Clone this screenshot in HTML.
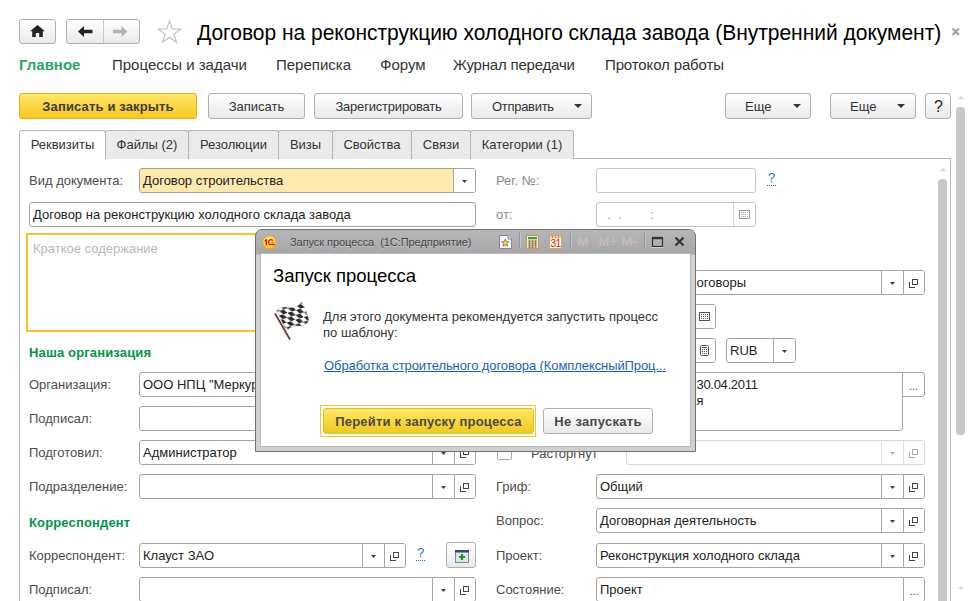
<!DOCTYPE html>
<html>
<head>
<meta charset="utf-8">
<style>
*{box-sizing:border-box;margin:0;padding:0}
html,body{width:977px;height:601px;overflow:hidden;background:#fff}
body{font-family:"Liberation Sans",sans-serif;font-size:13px;color:#333;position:relative}
.a{position:absolute;white-space:nowrap}
.btn{position:absolute;height:26px;border:1px solid #b0b0b0;border-radius:3px;background:linear-gradient(#ffffff,#e9e9e9);text-align:center;line-height:25px;font-size:13px;color:#333;white-space:nowrap}
.ybtn{border-color:#e2b01a;background:linear-gradient(#ffe868,#f8c71f);font-weight:bold;color:#3c3c3c}
.tab{position:absolute;top:130px;height:29px;border:1px solid #b4b4b4;border-bottom:none;border-radius:3px 3px 0 0;background:#ebebeb;font-size:13px;line-height:27px;text-align:center;color:#333}
.tab.act{background:#fff;z-index:2}
.tab.act:after{content:"";position:absolute;left:0;right:0;bottom:-1px;height:1px;background:#fff}
.lbl{position:absolute;font-size:13px;color:#4b4b4b;white-space:nowrap;line-height:16px}
.hdr{position:absolute;font-size:13px;font-weight:bold;color:#009646;white-space:nowrap;line-height:16px;letter-spacing:.15px}
.fld{position:absolute;height:25px;border:1px solid #a3a3a3;border-radius:3px;background:#fff;font-size:13px;line-height:23px;color:#222;padding-left:3px;white-space:nowrap;overflow:hidden}
.seg{position:absolute;top:0;bottom:0;width:21px;border-left:1px solid #a8a8a8;background:#fff}
.dd{width:22px}
.dd:after{content:"";position:absolute;left:8px;top:11px;width:5px;height:3px;background:#3c3c3c;clip-path:polygon(0 0,100% 0,50% 100%)}
.tri{position:absolute;width:0;height:0;border:4px solid transparent;border-top:4px solid #333;border-bottom:none}
.op i{position:absolute;display:block;left:5px;top:11px;width:6px;height:6px;border-left:1px solid #444;border-bottom:1px solid #444}
.op b{position:absolute;display:block;left:8px;top:8px;width:6px;height:6px;border:1px solid #444;background:#fff}
.dots,.dots2{font-size:11px;text-align:center;color:#444;line-height:27px}
.dis{border-color:#d6d6d6}
.dis .seg{border-color:#dedede}
.dis .dd:after{background:#b0b0b0}
.dis .op i,.dis .op b{border-color:#aaa}
.q{font-size:13px;color:#1a6fc4;border-bottom:1px dotted #1a6fc4;line-height:14px;width:9px;text-align:center}
.sarr{width:0;height:0;border:3px solid transparent}
.sarr.up{border-bottom:3px solid #d8d8d8;border-top:none}
.sarr.dn{border-top:3px solid #d8d8d8;border-bottom:none}
</style>
</head>
<body>
<div class="btn" style="left:19px;top:19px;width:37px;height:25px"></div>
<div class="btn" style="left:66px;top:19px;width:74px;height:25px"></div>
<div class="a" style="left:103px;top:20px;width:1px;height:23px;background:#c9c9c9"></div>
<svg class="a" style="left:30px;top:25px" width="15" height="12" viewBox="0 0 15 12"><path d="M7.500 0L0 6.200h2.200V12h3.600V8h3.400v4h3.600V6.200H15z" fill="#222"/></svg>
<svg class="a" style="left:78px;top:26px" width="15" height="11" viewBox="0 0 15 11"><path d="M0 5.500L6 0v3.700h8.500v3.600H6V11z" fill="#222"/></svg>
<svg class="a" style="left:113px;top:26px" width="15" height="11" viewBox="0 0 15 11"><path d="M14.500 5.500L8.500 0v3.700H0v3.600h8.500V11z" fill="#b4b4b4"/></svg>
<svg class="a" style="left:157px;top:19px" width="26" height="26" viewBox="0 0 26 26"><path d="M12.50 1.90L15.26 9.90L23.72 10.05L16.97 15.15L19.44 23.25L12.50 18.40L5.56 23.25L8.03 15.15L1.28 10.05L9.74 9.90Z" fill="#fff" stroke="#c6c6c6" stroke-width="1.300" stroke-linejoin="miter"/></svg>
<svg class="a" style="left:951px;top:27px" width="10" height="10" viewBox="0 0 10 10"><path d="M1.500 1.500l6.500 6.500M8 1.500l-6.500 6.500" stroke="#9a9a9a" stroke-width="1.800"/></svg>
<div class="a" id="title" style="left:197px;top:20px;font-size:21px;line-height:26px;color:#000;letter-spacing:-0.02px;transform-origin:0 20px;transform:scaleY(1.06)">Договор на реконструкцию холодного склада завода (Внутренний документ)</div>
<div class="a" style="left:19px;top:56px;font-size:15px;line-height:18px;font-weight:bold;color:#2fa468">Главное</div>
<div class="a" style="left:112px;top:56px;font-size:15px;line-height:18px;">Процессы и задачи</div>
<div class="a" style="left:276px;top:56px;font-size:15px;line-height:18px;">Переписка</div>
<div class="a" style="left:380px;top:56px;font-size:15px;line-height:18px;">Форум</div>
<div class="a" style="left:453px;top:56px;font-size:15px;line-height:18px;letter-spacing:-0.2px">Журнал передачи</div>
<div class="a" style="left:605px;top:56px;font-size:15px;line-height:18px;letter-spacing:-0.13px">Протокол работы</div>
<div class="btn ybtn" style="left:19px;top:93px;width:178px;letter-spacing:.15px">Записать и закрыть</div>
<div class="btn" style="left:208px;top:93px;width:97px">Записать</div>
<div class="btn" style="left:314px;top:93px;width:149px;letter-spacing:-.2px">Зарегистрировать</div>
<div class="btn" style="left:471px;top:93px;width:121px;text-align:left;padding-left:20px;letter-spacing:-.3px">Отправить</div>
<div class="btn" style="left:725px;top:93px;width:86px;text-align:left;padding-left:19px">Еще</div>
<div class="btn" style="left:830px;top:93px;width:86px;text-align:left;padding-left:19px">Еще</div>
<div class="btn" style="left:925px;top:93px;width:26px;font-size:16px;line-height:25px;color:#222;padding-left:1px">?</div>
<div class="tri" style="left:574px;top:104px"></div><div class="tri" style="left:793px;top:104px"></div><div class="tri" style="left:897px;top:104px"></div>
<div class="a" style="left:19px;top:158px;width:932px;height:460px;border:1px solid #b4b4b4"></div>
<div class="tab act" style="left:19px;width:87px">Реквизиты</div>
<div class="tab" style="left:105px;width:84px">Файлы (2)</div>
<div class="tab" style="left:188px;width:91px">Резолюции</div>
<div class="tab" style="left:278px;width:55px">Визы</div>
<div class="tab" style="left:332px;width:80px">Свойства</div>
<div class="tab" style="left:411px;width:60px">Связи</div>
<div class="tab" style="left:470px;width:104px">Категории (1)</div>
<div class="lbl" style="left:29px;top:173px;">Вид документа:</div>
<div class="fld " style="left:139px;top:168px;width:337px;height:25px;background:#fee9ae;border-color:#a9a191">Договор строительства<div class="seg dd" style="right:0px"></div></div>
<div class="fld " style="left:29px;top:202px;width:447px;height:25px;">Договор на реконструкцию холодного склада завода</div>
<div class="a" style="left:26px;top:233px;width:450px;height:99px;border:2px solid #f6c428;border-radius:0;background:#fff"><span style="position:absolute;left:5px;top:6px;font-size:13px;color:#b8b8b8">Краткое содержание</span></div>
<div class="hdr" style="left:29px;top:345px;">Наша организация</div>
<div class="lbl" style="left:29px;top:377px;">Организация:</div>
<div class="fld " style="left:139px;top:372px;width:337px;height:25px;">ООО НПЦ "Меркурий"<div class="seg op" style="right:0px"><i></i><b></b></div><div class="seg dd" style="right:21px"></div></div>
<div class="lbl" style="left:29px;top:411px;">Подписал:</div>
<div class="fld " style="left:139px;top:406px;width:337px;height:25px;"><div class="seg op" style="right:0px"><i></i><b></b></div><div class="seg dd" style="right:21px"></div></div>
<div class="lbl" style="left:29px;top:445px;">Подготовил:</div>
<div class="fld " style="left:139px;top:440px;width:337px;height:25px;">Администратор<div class="seg op" style="right:0px"><i></i><b></b></div><div class="seg dd" style="right:21px"></div></div>
<div class="lbl" style="left:29px;top:479px;">Подразделение:</div>
<div class="fld " style="left:139px;top:474px;width:337px;height:25px;"><div class="seg op" style="right:0px"><i></i><b></b></div><div class="seg dd" style="right:21px"></div></div>
<div class="hdr" style="left:29px;top:515px;">Корреспондент</div>
<div class="lbl" style="left:29px;top:548px;">Корреспондент:</div>
<div class="fld " style="left:139px;top:543px;width:267px;height:25px;">Клауст ЗАО<div class="seg op" style="right:0px"><i></i><b></b></div><div class="seg dd" style="right:21px"></div></div>
<div class="a q" style="left:416px;top:546px">?</div>
<div class="btn" style="left:446px;top:542px;width:30px;height:26px"><svg style="position:absolute;left:8px;top:7px" width="14" height="13" viewBox="0 0 14 13"><rect x=".5" y=".5" width="13" height="12" fill="#d9e6f2" stroke="#7b8a9b"/><rect x="0" y="0" width="14" height="2.500" fill="#2d4b6e"/><path d="M4 7h6M7 4v6" stroke="#1e9a1e" stroke-width="2.200"/></svg></div>
<div class="lbl" style="left:29px;top:582px;">Подписал:</div>
<div class="fld " style="left:139px;top:577px;width:337px;height:25px;"><div class="seg op" style="right:0px"><i></i><b></b></div><div class="seg dd" style="right:21px"></div></div>
<div class="lbl" style="left:496px;top:173px;color:#8a8a8a">Рег. №:</div>
<div class="fld " style="left:596px;top:168px;width:160px;height:25px;border-color:#c4c4c4"></div>
<div class="a q" style="left:767px;top:171px">?</div>
<div class="lbl" style="left:496px;top:207px;color:#8a8a8a">от:</div>
<div class="fld " style="left:596px;top:202px;width:160px;height:25px;border-color:#c4c4c4"><span style="color:#999">&nbsp;&nbsp;.&nbsp;&nbsp;.&nbsp;&nbsp;&nbsp;&nbsp;&nbsp;&nbsp;&nbsp;&nbsp;:</span><div class="seg cal" style="right:0;width:22px;border-color:#d0d0d0"><svg width="11" height="9" viewBox="0 0 11 9" style="position:absolute;left:5px;top:7px"><rect x=".5" y=".5" width="10" height="8" fill="#fff" stroke="#999"/><rect x="2" y="2" width="1" height="1" fill="#aaa"/><rect x="4" y="2" width="1" height="1" fill="#aaa"/><rect x="6" y="2" width="1" height="1" fill="#aaa"/><rect x="8" y="2" width="1" height="1" fill="#aaa"/><rect x="2" y="4" width="1" height="1" fill="#aaa"/><rect x="4" y="4" width="1" height="1" fill="#aaa"/><rect x="6" y="4" width="1" height="1" fill="#aaa"/><rect x="8" y="4" width="1" height="1" fill="#aaa"/><rect x="2" y="6" width="1" height="1" fill="#aaa"/><rect x="4" y="6" width="1" height="1" fill="#aaa"/><rect x="6" y="6" width="1" height="1" fill="#aaa"/><rect x="8" y="6" width="1" height="1" fill="#aaa"/></svg></div></div>
<div class="fld " style="left:596px;top:270px;width:329px;height:25px;"><span style="position:absolute;left:99.500px">оговоры</span><div class="seg op" style="right:0px"><i></i><b></b></div><div class="seg dd" style="right:21px"></div></div>
<div class="fld " style="left:596px;top:304px;width:120px;height:25px;"><div class="seg" style="right:0;width:22px"><svg width="11" height="9" viewBox="0 0 11 9" style="position:absolute;left:5px;top:7px"><rect x=".5" y=".5" width="10" height="8" fill="#fff" stroke="#555"/><rect x="2" y="2" width="1" height="1" fill="#555"/><rect x="4" y="2" width="1" height="1" fill="#555"/><rect x="6" y="2" width="1" height="1" fill="#555"/><rect x="8" y="2" width="1" height="1" fill="#555"/><rect x="2" y="4" width="1" height="1" fill="#555"/><rect x="4" y="4" width="1" height="1" fill="#555"/><rect x="6" y="4" width="1" height="1" fill="#555"/><rect x="8" y="4" width="1" height="1" fill="#555"/><rect x="2" y="6" width="1" height="1" fill="#555"/><rect x="4" y="6" width="1" height="1" fill="#555"/><rect x="6" y="6" width="1" height="1" fill="#555"/><rect x="8" y="6" width="1" height="1" fill="#555"/></svg></div></div>
<div class="fld " style="left:596px;top:338px;width:120px;height:25px;"><div class="seg" style="right:0;width:22px"><svg width="9" height="11" viewBox="0 0 9 11" style="position:absolute;left:6px;top:6px"><rect x=".5" y=".5" width="8" height="10" rx="1" fill="#fff" stroke="#555"/><rect x="2" y="2" width="5" height="1" fill="#555"/><rect x="2" y="4" width="1" height="1" fill="#555"/><rect x="4" y="4" width="1" height="1" fill="#555"/><rect x="6" y="4" width="1" height="1" fill="#555"/><rect x="2" y="6" width="1" height="1" fill="#555"/><rect x="4" y="6" width="1" height="1" fill="#555"/><rect x="6" y="6" width="1" height="1" fill="#555"/><rect x="2" y="8" width="1" height="1" fill="#555"/><rect x="4" y="8" width="1" height="1" fill="#555"/><rect x="6" y="8" width="1" height="1" fill="#555"/></svg></div></div>
<div class="fld " style="left:726px;top:338px;width:70px;height:25px;">RUB<div class="seg dd" style="right:0px"></div></div>
<div class="fld" style="left:596px;top:372px;width:307px;height:59px;border-radius:3px 0 3px 3px;line-height:16px;white-space:normal"><span style="position:absolute;left:99.500px;top:4px;letter-spacing:-.3px">30.04.2011</span><span style="position:absolute;left:99.500px;top:20px">я</span></div>
<div class="fld dots2" style="left:902px;top:372px;width:23px;height:25px;border-radius:0 3px 3px 0;padding:0;text-align:center">...</div>
<div class="a" style="left:497px;top:445px;width:15px;height:15px;border:1px solid #a9a9a9;border-radius:2px;background:#fff"></div>
<div class="lbl" style="left:531px;top:446px;">Расторгнут</div>
<div class="fld dis" style="left:626px;top:440px;width:299px;height:25px;"><div class="seg op" style="right:0px"><i></i><b></b></div><div class="seg dd" style="right:21px"></div></div>
<div class="lbl" style="left:496px;top:479px;">Гриф:</div>
<div class="fld " style="left:596px;top:474px;width:329px;height:25px;">Общий<div class="seg op" style="right:0px"><i></i><b></b></div><div class="seg dd" style="right:21px"></div></div>
<div class="lbl" style="left:496px;top:513px;">Вопрос:</div>
<div class="fld " style="left:596px;top:508px;width:329px;height:25px;">Договорная деятельность<div class="seg op" style="right:0px"><i></i><b></b></div><div class="seg dd" style="right:21px"></div></div>
<div class="lbl" style="left:496px;top:548px;">Проект:</div>
<div class="fld " style="left:596px;top:543px;width:329px;height:25px;">Реконструкция холодного склада<div class="seg op" style="right:0px"><i></i><b></b></div><div class="seg dd" style="right:21px"></div></div>
<div class="lbl" style="left:496px;top:582px;">Состояние:</div>
<div class="fld " style="left:596px;top:577px;width:329px;height:25px;">Проект<div class="seg dots" style="right:0px">...</div></div>
<div class="a" style="left:938px;top:179px;width:9px;height:430px;background:#c8c8c8;border-radius:4px"></div>
<div class="a" style="left:956px;top:107px;width:9px;height:328px;background:#c8c8c8;border-radius:4px"></div>
<div class="a sarr up" style="left:940px;top:168px"></div><div class="a sarr up" style="left:958px;top:96px"></div><div class="a sarr dn" style="left:958px;top:587px"></div>
<div id="dlg" class="a" style="left:255px;top:229px;width:441px;height:223px;border:1px solid #707070;border-radius:7px 7px 0 0;background:linear-gradient(#b6b6b9 0,#a7a7aa 24px,#d2d2d2 25px,#cfcfcf 100%)">
 <div class="a" style="left:5px;top:24px;width:429px;height:192px;background:#fff;box-shadow:0 0 0 1px #b9b9b9"></div>
 <svg class="a" style="left:6px;top:5px" width="15" height="15" viewBox="0 0 15 15"><defs><radialGradient id="lg" cx=".45" cy=".35" r=".7"><stop offset="0" stop-color="#fff27a"/><stop offset=".7" stop-color="#ffd51f"/><stop offset="1" stop-color="#e9a400"/></radialGradient></defs><circle cx="7.500" cy="7.500" r="6.700" fill="url(#lg)" stroke="#d89a2a" stroke-width=".6"/><path d="M2.800 5.800l1.500-.9v5.300" fill="none" stroke="#e3101a" stroke-width="1.400"/><path d="M10.800 5.700A2.300 2.300 0 0 0 6.600 7.300A2.300 2.300 0 0 0 8.900 9.600H12.600" fill="none" stroke="#e3101a" stroke-width="1.300"/><path d="M9.300 7.900H12" fill="none" stroke="#e3101a" stroke-width=".9"/></svg>
 <div class="a" style="left:34px;top:5px;font-size:11px;line-height:14px;color:#454545;letter-spacing:-.06px;text-shadow:0 1px 0 rgba(255,255,255,.35)">Запуск процесса&nbsp; (1С:Предприятие)</div>
 <svg class="a" style="left:243px;top:5px" width="13" height="14" viewBox="0 0 13 14"><path d="M.5.500h8.500l3.500 3.500v9.500H.5z" fill="#f4f6fa" stroke="#7d8797"/><path d="M9 .5V4h3.500" fill="#dfe4ec" stroke="#7d8797"/><path d="M6.300 4.200l1.100 2.300 2.500.3-1.800 1.800.4 2.500-2.200-1.200-2.200 1.200.4-2.500L2.700 6.800l2.500-.3z" fill="#f7d34a" stroke="#6c5a1c" stroke-width=".7"/></svg>
 <div class="a" style="left:263px;top:2px;width:2px;height:16px;border-left:1px solid #979797;border-right:1px solid #c6c6c6"></div>
 <svg class="a" style="left:270px;top:5px" width="13" height="14" viewBox="0 0 13 14"><rect x=".5" y=".5" width="12" height="13" fill="#fbe9c3" stroke="#b99a66"/><rect x="2" y="2" width="9" height="2.200" fill="#3f9a3f"/><rect x="2.5" y="5.5" width="2" height="1.200" fill="#4a3c28"/><rect x="5.5" y="5.5" width="2" height="1.200" fill="#4a3c28"/><rect x="8.5" y="5.5" width="2" height="1.200" fill="#4a3c28"/><rect x="2.5" y="7.5" width="2" height="1.200" fill="#4a3c28"/><rect x="5.5" y="7.5" width="2" height="1.200" fill="#4a3c28"/><rect x="8.5" y="7.5" width="2" height="1.200" fill="#4a3c28"/><rect x="2.5" y="9.5" width="2" height="1.200" fill="#4a3c28"/><rect x="5.5" y="9.5" width="2" height="1.200" fill="#4a3c28"/><rect x="8.5" y="9.5" width="2" height="1.200" fill="#4a3c28"/><rect x="2.5" y="11.5" width="2" height="1.200" fill="#4a3c28"/><rect x="5.5" y="11.5" width="2" height="1.200" fill="#4a3c28"/><rect x="8.5" y="11.5" width="2" height="1.200" fill="#c0392b"/></svg>
 <svg class="a" style="left:293px;top:4px" width="14" height="15" viewBox="0 0 14 15"><rect x=".5" y="1.500" width="12" height="13" fill="#fff7e8" stroke="#c9a570"/><rect x="1" y="2" width="11" height="2.500" fill="#f6c98c"/><rect x="3" y="2.500" width="1" height="1" fill="#8a5a2a"/><rect x="6" y="2.500" width="1" height="1" fill="#8a5a2a"/><rect x="9" y="2.500" width="1" height="1" fill="#8a5a2a"/><text x="6.500" y="13.200" text-anchor="middle" font-family="Liberation Sans" font-size="10.500" fill="#e0261c" letter-spacing="-.7">31</text></svg>
 <div class="a" style="left:314px;top:2px;width:2px;height:16px;border-left:1px solid #979797;border-right:1px solid #c6c6c6"></div>
 <div class="a" style="left:321.5px;top:5px;font-size:13px;line-height:14px;font-weight:bold;color:#c9bab4">M</div><div class="a" style="left:342.5px;top:5px;font-size:13px;line-height:14px;font-weight:bold;color:#c9bab4">M+</div><div class="a" style="left:365.5px;top:5px;font-size:13px;line-height:14px;font-weight:bold;color:#c9bab4">M-</div>
 <div class="a" style="left:388px;top:2px;width:2px;height:16px;border-left:1px solid #979797;border-right:1px solid #c6c6c6"></div>
 <svg class="a" style="left:395px;top:6px" width="13" height="12" viewBox="0 0 13 12"><rect x="1.500" y="1.500" width="10" height="9" fill="none" stroke="#333" stroke-width="1.200"/><rect x="1" y="1" width="11" height="2.200" fill="#333"/><path d="M1 11.500h11" stroke="#ddd" stroke-width=".8"/></svg>
 <svg class="a" style="left:418px;top:6px" width="11" height="11" viewBox="0 0 11 11"><path d="M1.500 1.500l8 8M9.500 1.500l-8 8" stroke="#333" stroke-width="2.200"/></svg>
 <svg class="a" style="left:16px;top:69px" width="42" height="44" viewBox="0 0 42 44"><defs><pattern id="chk" width="9" height="9" patternUnits="userSpaceOnUse" patternTransform="rotate(-18) skewX(30)"><rect width="9" height="9" fill="#fff"/><rect width="4.500" height="4.500" fill="#2b2b2b"/><rect x="4.500" y="4.500" width="4.500" height="4.500" fill="#2b2b2b"/></pattern></defs><path d="M4.500 12C9 7 14 8 19 8.500C24 9 27 6 29.500 3C33 8 35 14 37 21C34 27 30 27 25 27C20 27 17 29 14.500 32Z" fill="url(#chk)" stroke="#bdbdbd" stroke-width=".5"/><path d="M3 14.500L18 40.500" stroke="#6b3535" stroke-width="1.700"/></svg>
 <div class="a" style="left:17px;top:35px;font-size:18.500px;line-height:22px;color:#000">Запуск процесса</div>
 <div class="a" style="left:67px;top:79px;font-size:13px;line-height:16px;color:#333;white-space:normal;width:350px">Для этого документа рекомендуется запустить процесс по шаблону:</div>
 <div class="a" style="left:68px;top:128px;font-size:13px;line-height:16px;color:#1b5fb4;text-decoration:underline;letter-spacing:-0.09px">Обработка строительного договора (КомплексныйПроц...</div>
 <div class="a" style="left:64px;top:175px;width:216px;height:32px;border:1px solid #f5c832"></div>
 <div class="btn ybtn" style="left:67px;top:178px;width:211px;height:26px;color:#4a4a4a;background:linear-gradient(#ffe862,#f1c91f);border-color:#e2bd2c;letter-spacing:.2px">Перейти к запуску процесса</div>
 <div class="btn" style="left:287px;top:178px;width:110px;height:26px;font-weight:bold;color:#4a4a4a;letter-spacing:.3px">Не запускать</div>
</div>
</body>
</html>
